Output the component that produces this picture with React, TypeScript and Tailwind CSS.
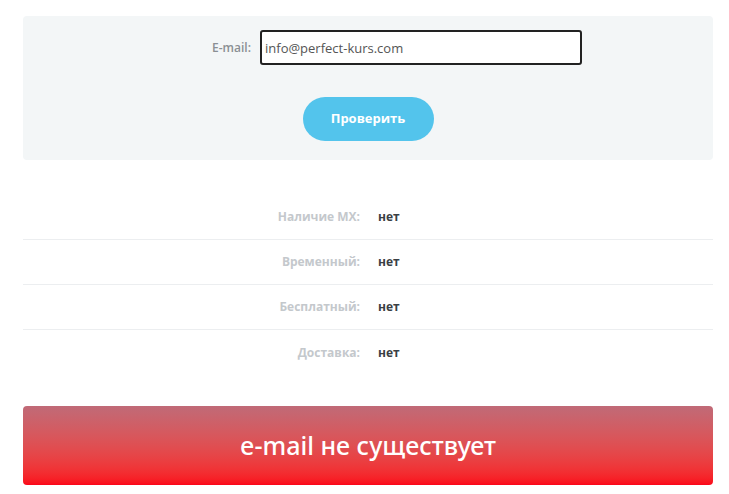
const rows = [
  { label: "Наличие MX:", value: "нет" },
  { label: "Временный:", value: "нет" },
  { label: "Бесплатный:", value: "нет" },
  { label: "Доставка:", value: "нет" },
];

export default function App() {
  return (
    <div className="min-h-screen bg-white pt-[16px] font-['Open_Sans',sans-serif]">
      <div className="ml-[23px] w-[690px]">
        {/* check form */}
        <div className="rounded-[4px] bg-[#f3f6f7] pb-[19px] pt-[14px]">
          <div className="flex items-center">
            <label className="w-[228px] text-right text-[12px] font-semibold text-[#8a8f94]">
              E-mail:
            </label>
            <input
              type="text"
              defaultValue="info@perfect-kurs.com"
              className="ml-[9px] h-[35px] w-[322px] rounded-[3px] border-2 border-[#222] bg-white px-[3px] text-[13px] text-[#555] outline-none"
            />
          </div>
          <div className="mt-[32px] flex justify-center">
            <button
              type="button"
              className="h-[44px] w-[131px] rounded-full bg-[#53c4ec] text-[13px] font-bold text-white"
            >
              Проверить
            </button>
          </div>
        </div>

        {/* results */}
        <div className="mt-[35px]">
          {rows.map((r, i) => (
            <div
              key={r.label}
              className={
                "grid h-[45px] grid-cols-2 items-center " +
                (i < rows.length - 1 ? "border-b border-[#eceef0]" : "")
              }
            >
              <span className="pr-[8px] text-right text-[12px] font-bold text-[#c4c8cc]">
                {r.label}
              </span>
              <span className="pl-[10px] text-[12px] font-bold text-[#3a3f44]">
                {r.value}
              </span>
            </div>
          ))}
        </div>

        <div className="mt-[31px] flex h-[79px] items-center justify-center rounded-[4px] bg-gradient-to-b from-[#c06a77] to-[#fb0519]">
          <span className="font-['Noto_Sans',sans-serif] text-[25px] font-medium text-white">
            e-mail не существует
          </span>
        </div>
      </div>
    </div>
  );
}
